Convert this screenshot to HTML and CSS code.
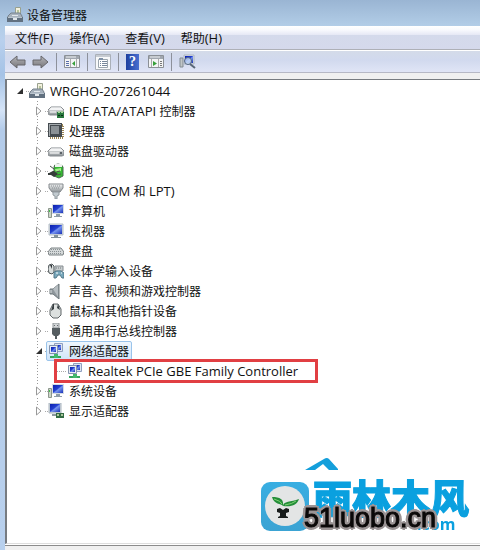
FILE: index.html
```html
<!DOCTYPE html>
<html lang="zh-CN">
<head>
<meta charset="utf-8">
<title>设备管理器</title>
<link rel="stylesheet" href="styles.css">
</head>
<body>
<svg class="sprite" aria-hidden="true">
  <defs>
    <linearGradient id="screen" x1="0" y1="0" x2="1" y2="1"><stop offset="0" stop-color="#0a1fae"/><stop offset=".45" stop-color="#2440cf"/><stop offset=".55" stop-color="#7795f0"/><stop offset="1" stop-color="#1830b8"/></linearGradient>
    <linearGradient id="metal" x1="0" y1="0" x2="0" y2="1"><stop offset="0" stop-color="#f4f5f5"/><stop offset="1" stop-color="#8c9296"/></linearGradient>
    <linearGradient id="arrowfill" x1="0" y1="0" x2="0" y2="1"><stop offset="0" stop-color="#b5b5b8"/><stop offset="1" stop-color="#77777b"/></linearGradient>
  </defs>
  <symbol id="root" viewBox="0 0 16 16"><path d="M8.500.500h5v8h-5z" fill="#f3f1df" stroke="#99a18e"/><path d="M10 3h2v4h-2z" fill="#b8c59a"/><path d="M2 8l2-2h9l2 3v2H1V9z" fill="#a7b2bd" stroke="#77828d"/><path d="M0 10h16v5H0z" fill="#627180"/><path d="M1 10h14v1H1z" fill="#b9c4ce"/><path d="M5 8h6v1H5zM6 11h4v2H6z" fill="#e1e7eb"/></symbol>
  <symbol id="drive" viewBox="0 0 16 16"><path d="M3 5h10l3 3v4l-2 1H2l-2-1V8z" fill="url(#metal)" stroke="#858a8e"/><path d="M3 5.500h10l2 2.500H1z" fill="#f3f4f5"/><path d="M2 10h9" stroke="#fff"/><path d="M12 9h2v2h-2z" fill="#5b6267"/></symbol>
  <symbol id="ide" viewBox="0 0 16 16"><path d="M3 4h10l3 3v4l-2 1H2l-2-1V7z" fill="url(#metal)" stroke="#858a8e"/><path d="M3 4.500h10l2 2.500H1z" fill="#f3f4f5"/><path d="M2 9h6" stroke="#fff"/><path d="M9 9h7v6H9z" fill="#28773d"/><path d="M10 8v2h2V8zm3 0v2h2V8z" fill="#a9d29e"/><path d="M10 12h2v1h-2zm3 0h2v1h-2z" fill="#092f18"/></symbol>
  <symbol id="cpu" viewBox="0 0 16 16"><path d="M2 2h13v13H2z" fill="none" stroke="#9b8451" stroke-width="2" stroke-dasharray="1 1"/><path d="M0 0h14v14H0z" fill="#454b50"/><path d="M3 3h8v8H3z" fill="#8b9195"/><path d="M1 1h12v1H2v11H1z" fill="#a4aaad"/></symbol>
  <symbol id="battery" viewBox="0 0 16 16"><path d="M6 4q0-3 4-3t5 3v9l-4 2-5-2z" fill="#35b832" stroke="#4b6951"/><path d="M7 1h7v3H7z" fill="#eef2ee"/><path d="M7 6l6-1v3L8 9z" fill="#a5ef8a"/><path d="M0 10c3 0 3-2 6-2l4 3-4 3-3-2H0z" fill="#353c39"/><path d="M8 9l4-1M9 12l4-1M2 3l4 3" stroke="#4c504c"/></symbol>
  <symbol id="port" viewBox="0 0 16 16"><path d="M1 1h14v4l-3 4H4L1 5z" fill="url(#metal)" stroke="#84898d"/><path d="M3 3h10M4 5h8" stroke="#8a9095" stroke-dasharray="1 1"/><path d="M5 9h6v3l-2 1v3H7v-3l-2-1z" fill="#c2cbd0" stroke="#929a9f"/></symbol>
  <symbol id="pc" viewBox="0 0 16 16"><path d="M0.500 5.500h3v9h-3z" fill="#cdd5c9" stroke="#8c978c"/><path d="M1 7h1v2H1z" fill="#42be4a"/><path d="M4 1h12v10H4z" fill="#d4dbe3"/><path d="M5 2h10v8H5z" fill="url(#screen)"/><path d="M8 11h4v2h2v1H6v-1h2z" fill="#8e9da8"/></symbol>
  <symbol id="monitor" viewBox="0 0 16 16"><path d="M1 1h14v11H1z" fill="#d2d8df" stroke="#b3bdc6"/><path d="M2 2h12v9H2z" fill="url(#screen)"/><path d="M6 12h4v2h3v1H3v-1h3z" fill="#82919b"/></symbol>
  <symbol id="keyboard" viewBox="0 0 16 16"><path d="M3 5h10l3 4-1 3H1L0 9z" fill="#d4d8d9" stroke="#7b8284"/><path d="M3 6.500h10M2 8.500h12M2 10.500h12" stroke="#8a9194" stroke-dasharray="1 1"/></symbol>
  <symbol id="hid" viewBox="0 0 16 16"><path d="M1 2l3-1 2 2v6l-2 2-3-1-1-4z" fill="#d9dddd" stroke="#4f5659"/><path d="M2 2l2 4V2z" fill="#30363a"/><path d="M7 3h8v5H7z" fill="#c8cdcf" stroke="#858c90"/><path d="M8 5h6" stroke="#737b7f" stroke-dasharray="1 1"/><path d="M6 9l3-1h4l3 2v5h-2l-2-3h-2l-2 3H6z" fill="#79a8bc" stroke="#547989"/><path d="M8 10h2M13 10h1" stroke="#fff"/></symbol>
  <symbol id="sound" viewBox="0 0 16 16"><path d="M2 6h3l6-5v15l-6-5H2z" fill="#8f979c" stroke="#6f787d"/><path d="M5 6l5-4v12z" fill="#b6bdc1"/><path d="M3 7v3" stroke="#dce0e1"/></symbol>
  <symbol id="mouse" viewBox="0 0 16 16"><path d="M5 1h5l3 5v6l-3 3H5l-3-3V7z" fill="#dce0df" stroke="#606669"/><path d="M5 1h1v5L3 8zM10 1l2 6-3-2z" fill="#373e41"/><path d="M7 2v4" stroke="#e7e9e9"/></symbol>
  <symbol id="usb" viewBox="0 0 16 16"><path d="M5 0h6v5H5z" fill="#d3d6d8" stroke="#8f9598"/><path d="M6 2h1v1H6zm3 0h1v1H9z" fill="#656b6e"/><path d="M4 5h8v6l-2 2H6l-2-2z" fill="#555d61"/><path d="M8 12v4" stroke="#555d61" stroke-width="2"/></symbol>
  <symbol id="net" viewBox="0 0 16 16"><path d="M6.500.500h8v8h-8z" fill="#dde4ef" stroke="#8f9fbf"/><path d="M8 2h5v5H8z" fill="url(#screen)"/><path d="M1.500 2.500h8v8h-8z" fill="#e7edf4" stroke="#8493ae"/><path d="M3 4h5v5H3z" fill="url(#screen)"/><path d="M6 11h3v2h4v2H2v-2h4z" fill="#35a860"/><path d="M6 11h4v4H6z" fill="#43b96c"/></symbol>
  <symbol id="display" viewBox="0 0 16 16"><path d="M1 0h12v10H1z" fill="#d1d8df" stroke="#aab5bf"/><path d="M2 1h10v8H2z" fill="url(#screen)"/><path d="M4 11h6v2H4z" fill="#8b989f"/><path d="M8 10h8v5H8z" fill="#336b43"/><path d="M9 11h2v2H9zm4 0h2v2h-2z" fill="#a9c79c"/></symbol>
  <symbol id="closed" viewBox="0 0 6 10"><path d="M.5 1v8L5 5z" fill="#fff" stroke="#999"/></symbol>
  <symbol id="open" viewBox="0 0 6 6"><path d="M6 0v6H0z" fill="#303030"/></symbol>
  <symbol id="arrow" viewBox="0 0 17 14"><path d="M1 7l7-6v4h8v5H8v3z" fill="url(#arrowfill)" stroke="#67676b" stroke-linejoin="round"/></symbol>
</svg>
<div class="window">
  <header class="title"><svg class="icon"><use href="#root"/></svg><h1>设备管理器</h1></header>
  <div class="frame">
    <nav class="menu">
      <button>文件<span class="latin">(F)</span></button><button>操作<span class="latin">(A)</span></button><button>查看<span class="latin">(V)</span></button><button>帮助<span class="latin">(H)</span></button>
    </nav>
    <div class="toolbar" role="toolbar" aria-label="工具栏">
      <button aria-label="后退"><svg width="17" height="14"><use href="#arrow"/></svg></button>
      <button class="forward" aria-label="前进"><svg width="17" height="14"><use href="#arrow"/></svg></button>
      <i class="divider"></i>
      <button aria-label="显示控制台树"><svg width="16" height="13" viewBox="0 0 16 13"><path d="M.5.5h15v12H.5z" fill="#f3f4f5" stroke="#8b9096"/><path d="M1 1h14v3H1z" fill="#a1a7af"/><path d="M2 2h10" stroke="#edf0f3"/><path d="M6.500 4v8M12.500 4v8" stroke="#aaa"/><path d="M2 6.500h3M2 8.500h3M2 10.500h3" stroke="#596eaa"/><path d="M11 6v5L8 8.500z" fill="#369f39"/></svg></button>
      <i class="divider"></i>
      <button aria-label="属性"><svg width="16" height="16" viewBox="0 0 16 16"><path d="M.5.5h15v15H.5z" fill="#f8f9fa" stroke="#aab0b8"/><path d="M1 1h14v2H1z" fill="#c6cbd2"/><path d="M3.500 5.500h9v8h-9z" fill="#fff" stroke="#9ba5ad"/><path d="M4 4h4v2H4z" fill="#8091a7"/><path d="M5 7.500h1m1 0h5M5 9.500h1m1 0h5M5 11.500h1m1 0h5" stroke="#77879a"/></svg></button>
      <i class="divider"></i>
      <button class="help" aria-label="帮助">?</button>
      <button aria-label="操作窗格"><svg width="16" height="13" viewBox="0 0 16 13"><path d="M.5.5h15v12H.5z" fill="#f3f4f5" stroke="#8b9096"/><path d="M1 1h14v3H1z" fill="#a1a7af"/><path d="M2 2h10" stroke="#edf0f3"/><path d="M3.500 4v8M10.500 4v8" stroke="#aaa"/><path d="M12 6.500h2M12 8.500h2M12 10.500h2" stroke="#777"/><path d="M5 6v5l4-2.500z" fill="#369f39"/></svg></button>
      <i class="divider"></i>
      <button aria-label="扫描检测硬件改动"><svg width="17" height="16" viewBox="0 0 17 16"><path d="M1 4h3v9H1z" fill="#c1c6c7" stroke="#818b91"/><path d="M5 1h10v9H5z" fill="#d8dfe8" stroke="#aeb6c0"/><path d="M6 2h8v7H6z" fill="url(#screen)"/><circle cx="9" cy="7" r="3.500" fill="#cadff5" fill-opacity=".8" stroke="#516480"/><path d="M11 10l5 4" stroke="#596777" stroke-width="2"/></svg></button>
    </div>
    <div class="strip"></div>
    <main class="pane">
      <ul class="tree">
        <li>
          <div class="row"><button class="toggle" aria-label="折叠"><svg class="open"><use href="#open"/></svg></button><i class="link"></i><svg class="icon"><use href="#root"/></svg><span class="label latin">WRGHO-207261044</span></div>
          <ul class="group">
            <li class="row"><button class="toggle" aria-label="展开"><svg class="closed"><use href="#closed"/></svg></button><i class="link"></i><svg class="icon"><use href="#ide"/></svg><span class="label"><span class="latin">IDE ATA/ATAPI </span>控制器</span></li>
            <li class="row"><button class="toggle" aria-label="展开"><svg class="closed"><use href="#closed"/></svg></button><i class="link"></i><svg class="icon"><use href="#cpu"/></svg><span class="label">处理器</span></li>
            <li class="row"><button class="toggle" aria-label="展开"><svg class="closed"><use href="#closed"/></svg></button><i class="link"></i><svg class="icon"><use href="#drive"/></svg><span class="label">磁盘驱动器</span></li>
            <li class="row"><button class="toggle" aria-label="展开"><svg class="closed"><use href="#closed"/></svg></button><i class="link"></i><svg class="icon"><use href="#battery"/></svg><span class="label">电池</span></li>
            <li class="row"><button class="toggle" aria-label="展开"><svg class="closed"><use href="#closed"/></svg></button><i class="link"></i><svg class="icon"><use href="#port"/></svg><span class="label">端口<span class="latin"> (COM </span>和<span class="latin"> LPT)</span></span></li>
            <li class="row"><button class="toggle" aria-label="展开"><svg class="closed"><use href="#closed"/></svg></button><i class="link"></i><svg class="icon"><use href="#pc"/></svg><span class="label">计算机</span></li>
            <li class="row"><button class="toggle" aria-label="展开"><svg class="closed"><use href="#closed"/></svg></button><i class="link"></i><svg class="icon"><use href="#monitor"/></svg><span class="label">监视器</span></li>
            <li class="row"><button class="toggle" aria-label="展开"><svg class="closed"><use href="#closed"/></svg></button><i class="link"></i><svg class="icon"><use href="#keyboard"/></svg><span class="label">键盘</span></li>
            <li class="row"><button class="toggle" aria-label="展开"><svg class="closed"><use href="#closed"/></svg></button><i class="link"></i><svg class="icon"><use href="#hid"/></svg><span class="label">人体学输入设备</span></li>
            <li class="row"><button class="toggle" aria-label="展开"><svg class="closed"><use href="#closed"/></svg></button><i class="link"></i><svg class="icon"><use href="#sound"/></svg><span class="label">声音、视频和游戏控制器</span></li>
            <li class="row"><button class="toggle" aria-label="展开"><svg class="closed"><use href="#closed"/></svg></button><i class="link"></i><svg class="icon"><use href="#mouse"/></svg><span class="label">鼠标和其他指针设备</span></li>
            <li class="row"><button class="toggle" aria-label="展开"><svg class="closed"><use href="#closed"/></svg></button><i class="link"></i><svg class="icon"><use href="#usb"/></svg><span class="label">通用串行总线控制器</span></li>
            <li>
              <div class="row"><button class="toggle" aria-label="折叠"><svg class="open"><use href="#open"/></svg></button><i class="link"></i><div class="selected"><svg class="icon"><use href="#net"/></svg><span class="label">网络适配器</span></div></div>
              <ul class="leaf"><li class="row marked"><i class="link"></i><svg class="icon"><use href="#net"/></svg><span class="label latin">Realtek PCIe GBE Family Controller</span></li></ul>
            </li>
            <li class="row"><button class="toggle" aria-label="展开"><svg class="closed"><use href="#closed"/></svg></button><i class="link"></i><svg class="icon"><use href="#pc"/></svg><span class="label">系统设备</span></li>
            <li class="row"><button class="toggle" aria-label="展开"><svg class="closed"><use href="#closed"/></svg></button><i class="link"></i><svg class="icon"><use href="#display"/></svg><span class="label">显示适配器</span></li>
          </ul>
        </li>
      </ul>
    </main>
    <footer class="status"></footer>
  </div>
</div>
<aside class="watermark">
  <svg class="roof" width="34" height="13" viewBox="0 0 34 13"><path d="M0 12L19 1q3-2 5 0l9 10v1h-9l-6-6-8 6z" fill="#149fdb"/></svg>
  <svg class="logo" width="48" height="49" viewBox="0 0 48 49"><defs><linearGradient id="badge" x1="0" y1="0" x2="0" y2="1"><stop stop-color="#38aee2"/><stop offset="1" stop-color="#3ba3d3"/></linearGradient></defs><rect width="48" height="49" rx="9" fill="url(#badge)"/><circle cx="24" cy="24" r="20" fill="#e3e5e5"/><path d="M11 15c8 0 12 2 11 9-2-3-9-1-11-9zM22 24c0-5 8-4 16-7-2 6-7 8-16 7z" fill="#238e39"/><path d="M13 17q7 2 8 5M24 23q7-1 11-4" fill="none" stroke="#80d273"/><path d="M16 27l3-1 3 2 3-2 3 1v3l-3 1v3l2 1v1H17v-1l2-1v-3l-3-1z" fill="#171c1b"/></svg>
  <strong class="brand">雨林木风</strong>
  <span class="domain">.com</span>
  <span class="site">51luobo.cn</span>
</aside>
</body>
</html>
```
FILE: styles.css
```css
*, *::before, *::after { box-sizing: border-box; }
body {
  margin: 0;
  font: 12px/20px "Noto Sans CJK SC", sans-serif;
  color: #111;
}
.latin { font-family: "Open Sans", "Noto Sans", sans-serif; font-size: 13px; line-height: 16px; }
.sprite { position: absolute; width: 0; height: 0; }
svg { display: block; flex: none; }
button { margin: 0; padding: 0; border: 0; background: none; color: inherit; font: inherit; }
ul { margin: 0; padding: 0; list-style: none; }
.icon { width: 16px; height: 16px; }

.window {
  display: flex;
  flex-direction: column;
  min-height: 100vh;
  padding-left: 5px;
  background: linear-gradient(#9ab5d3, #b2cde7 26px, #b9d0ed 40px, #a5c3e6 75px, #d5e4f7 110px, #b3cbe9 130px, #b8d0ed);
}
.title { display: flex; align-items: center; gap: 4px; height: 26px; padding: 3px 0 0 2px; }
.title h1 { margin: 0; font-size: 12px; font-weight: 400; }
.frame { display: flex; flex: 1; flex-direction: column; background: #f0f0f0; }
.menu {
  display: flex;
  gap: 16px;
  height: 24px;
  padding-left: 10px;
  border-bottom: 1px solid #aeb0b7;
  background: linear-gradient(#fff, #f8f9fd 4px, #e5e8f5 9px, #d4daeb 9px, #d5d9ec);
}
.toolbar {
  display: flex;
  align-items: center;
  gap: 6px;
  height: 23px;
  padding-left: 4px;
  border-top: 1px solid #fff;
  border-bottom: 1px solid #b6b8c5;
  background: linear-gradient(#d4dbe9, #d1d9ee 9px, #e0e5f6);
}
.forward svg { transform: scaleX(-1); }
.divider { width: 1px; height: 18px; margin: 0 1px; background: #8d919b; }
.help {
  width: 13px;
  height: 16px;
  background: linear-gradient(90deg, #1e409f, #496fd0);
  color: #fff;
  font: bold 14px/16px "Liberation Serif", serif;
}
.help + button { margin-left: 3px; }
.strip { height: 6px; }
.pane { flex: 1; padding: 1px 0 0 7px; border: 1px solid #777b80; border-left-width: 2px; border-right: 0; border-bottom-color: #dedede; background: #fff; }
.row { position: relative; display: flex; align-items: center; height: 20px; white-space: nowrap; }
.label { padding-left: 5px; }
.toggle { z-index: 1; display: flex; width: 12px; height: 10px; align-items: center; padding-left: 3px; }
.closed { width: 6px; height: 10px; background: #fff; }
.open { width: 6px; height: 6px; background: #fff; }
.link { width: 3px; height: 1px; background: repeating-linear-gradient(90deg, #aaa 0 1px, transparent 1px 2px); }
.group { position: relative; padding-left: 19px; }
.group::before {
  content: "";
  position: absolute;
  top: 0;
  bottom: 10px;
  left: 23px;
  width: 1px;
  background: repeating-linear-gradient(#999 0 1px, transparent 1px 3px);
}
.selected { display: flex; align-items: center; height: 20px; margin-left: -2px; padding: 0 2px 0 1px; border: 1px solid #9ac4eb; border-radius: 2px; background: linear-gradient(#eff6fd, #cfe4fa); }
.leaf { padding-left: 24px; }
.leaf .link { width: 10px; }
.marked::after { content: ""; position: absolute; top: -2px; left: -3px; width: 264px; height: 24px; border: 3px solid #e13f43; }
.status { height: 5px; border-top: 1px solid #8c8c8c; margin-top: 1px; box-shadow: 0 -1px #fff; }

.watermark { position: fixed; right: 0; bottom: 0; width: 220px; height: 100px; color: #0aa0df; }
.watermark > * { position: absolute; }
.roof { top: 8px; left: 45px; }
.logo { top: 32px; left: 1px; }
.brand { top: 26px; left: 53px; font: 900 39px/40px "Noto Sans CJK SC", sans-serif; -webkit-text-stroke: 1px #0aa0df; }
.domain { top: 64px; left: 157px; font: bold 16px/20px "Open Sans", sans-serif; }
.site {
  top: 48px;
  left: 44px;
  color: #0b0909;
  font: 27px/40px "Liberation Sans", sans-serif;
  -webkit-text-stroke: 1px #0b0909;
  text-shadow: 3px 0 #9b9495, -3px 0 #9b9495, 0 3px #9b9495, 0 -3px #9b9495, 2px 2px #9b9495, -2px -2px #9b9495, 2px -2px #9b9495, -2px 2px #9b9495;
}
```
